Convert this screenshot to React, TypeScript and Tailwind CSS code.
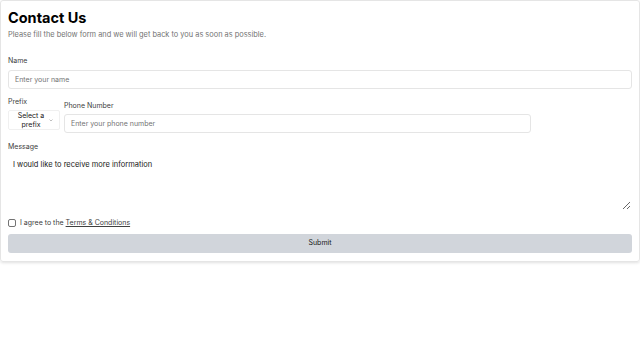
import React from "react";

export default function App() {
  return (
    <div className="w-[640px] h-[357px] bg-white" style={{ fontFamily: "Inter, 'Noto Sans', sans-serif" }}>
      <div className="mx-0 border border-[#e5e5e5] rounded-[3px] shadow-[0_1px_3px_rgba(0,0,0,0.12)] px-[7px] pt-[7px] pb-[8px] w-[640px]">
        <h1 className="text-[14.5px] leading-[19px] font-bold text-black">Contact Us</h1>
        <p className="mt-[2px] text-[7.4px] leading-[11px] text-[#737373]">
          Please fill the below form and we will get back to you as soon as possible.
        </p>
        <div className="mt-[16px]">
          <label className="block text-[7px] leading-[9px] font-normal text-[#404040]">Name</label>
          <input
            className="mt-[5px] block w-[624px] h-[19px] border border-[#e5e5e5] rounded-[3px] px-[6px] text-[7px] placeholder:text-[#737373] outline-none"
            placeholder="Enter your name"
          />
        </div>
        <div className="mt-[8px] flex gap-[4px] items-start">
          <div className="flex flex-col">
            <label className="block text-[7px] leading-[9px] font-normal text-[#404040]">Prefix</label>
            <div className="mt-[4px] w-[52px] h-[20px] border border-[#f0f0f0] rounded-[2px] flex items-center relative">
              <span className="w-[44px] text-center text-[7px] leading-[9px] text-[#171717]">Select a prefix</span>
              <svg className="absolute right-[6px] top-[8px]" width="4" height="3" viewBox="0 0 4 3">
                <path d="M0.5 0.5 L2 2 L3.5 0.5" stroke="#a3a3a3" strokeWidth="0.7" fill="none" />
              </svg>
            </div>
          </div>
          <div className="flex flex-col mt-[4px]">
            <label className="block text-[7px] leading-[9px] font-normal text-[#404040]">Phone Number</label>
            <input
              className="mt-[4px] block w-[467px] h-[19px] border border-[#e5e5e5] rounded-[3px] px-[6px] text-[7px] placeholder:text-[#737373] outline-none"
              placeholder="Enter your phone number"
            />
          </div>
        </div>
        <div className="mt-[9px]">
          <label className="block text-[7px] leading-[9px] font-normal text-[#404040]">Message</label>
          <textarea
            className="mt-[4px] block w-[624px] h-[56px] border border-white rounded-[3px] px-[4px] py-[3px] text-[7.5px] leading-[11px] text-[#171717] outline-none resize-y"
            defaultValue="I would like to receive more information"
          />
        </div>
        <div className="mt-[7px] flex items-center gap-[4px]">
          <span className="w-[8px] h-[8px] border border-[#737373] rounded-[2px] inline-block" />
          <span className="text-[7px] leading-[9px] text-[#404040]">
            I agree to the <span className="underline">Terms &amp; Conditions</span>
          </span>
        </div>
        <button className="mt-[7px] block w-[624px] h-[19px] bg-[#d1d5db] rounded-[3px] text-[7px] font-normal text-[#171717]">
          Submit
        </button>
      </div>
    </div>
  );
}
